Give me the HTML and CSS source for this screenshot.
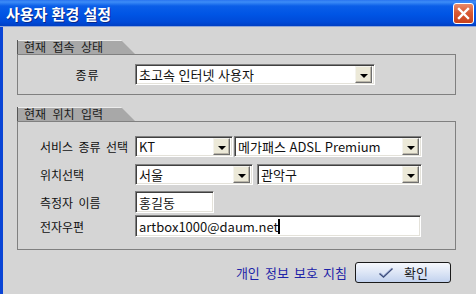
FILE: index.html
```html
<!DOCTYPE html>
<html lang="ko">
<head>
  <meta charset="UTF-8" />
  <title>사용자 환경 설정</title>
  <link rel="stylesheet" href="styles.css">
</head>
<body>
  <div class="titlebar">
    <span class="title">사용자 환경 설정</span>
    <span class="close">
      <svg width="13" height="13" viewBox="0 0 13 13"><path d="M2 2 L11 11 M11 2 L2 11" stroke="#fff" stroke-width="2.4" stroke-linecap="square"/></svg>
    </span>
  </div>

  <div class="client">
    <!-- 현재 접속 상태 -->
    <section class="group">
      <div class="tab">현재 접속 상태</div>
      <div class="box box-kind">
        <div class="row">
          <span class="label center">종류</span>
          <div class="combo w-kind"><span class="value">초고속 인터넷 사용자</span><span class="drop"></span></div>
        </div>
      </div>
    </section>

    <!-- 현재 위치 입력 -->
    <section class="group group-loc">
      <div class="tab">현재 위치 입력</div>
      <div class="box box-loc">
        <div class="row">
          <span class="label">서비스 종류 선택</span>
          <div class="combo w-isp"><span class="value">KT</span><span class="drop"></span></div>
          <div class="combo w-product"><span class="value">메가패스 ADSL Premium</span><span class="drop"></span></div>
        </div>
        <div class="row row-city">
          <span class="label">위치선택</span>
          <div class="combo w-city"><span class="value">서울</span><span class="drop"></span></div>
          <div class="combo w-gu"><span class="value">관악구</span><span class="drop"></span></div>
        </div>
        <div class="row row-name">
          <span class="label">측정자 이름</span>
          <div class="field w-name">홍길동</div>
        </div>
        <div class="row row-mail">
          <span class="label">전자우편</span>
          <div class="field w-mail">artbox1000@daum.net<span class="caret"></span></div>
        </div>
      </div>
    </section>

    <div class="footer">
      <a class="policy" href="#">개인 정보 보호 지침</a>
      <button class="ok">
        <svg width="16" height="12" viewBox="0 0 16 12"><path d="M1.5 6.5 L5.5 10 L14.5 1.5" fill="none" stroke="#3c4c7c" stroke-width="1.6"/><path d="M2.5 6 L5.5 8.6 L13.5 1.2" fill="none" stroke="#9fb0d8" stroke-width="0.8"/></svg>
        <span>확인</span>
      </button>
    </div>
  </div>
</body>
</html>
```

FILE: styles.css
```css
body {
  margin: 0;
  width: 476px;
  height: 294px;
  overflow: hidden;
  background: #d5d5d5;
  font-family: "Noto Sans CJK KR", "Noto Sans", sans-serif;
  color: #111;
}
.titlebar {
  height: 26px;
  display: flex;
  align-items: center;
  justify-content: space-between;
  padding: 0 2px 0 6px;
  background: linear-gradient(#2a74f0 0, #3d8cf7 2px, #0b5ee8 6px, #0055e5 14px, #004ad8 22px, #003fc4 26px);
  border-bottom: 1px solid #8fa6d8;
}
.title {
  color: #fff;
  font-size: 15px;
  font-weight: bold;
  text-shadow: 1px 1px 0 #0a2a8a;
}
.close {
  width: 19px;
  height: 19px;
  display: flex;
  align-items: center;
  justify-content: center;
  border: 1px solid #fff;
  border-radius: 3px;
  background: linear-gradient(#e88a6a, #d85a34 45%, #c8421c);
}
.client {
  height: 267px;
  box-sizing: border-box;
  border-left: 3px solid #0a45d6;
  padding: 13px 0 0 14px;
}
.tab {
  width: 118px;
  height: 14px;
  box-sizing: border-box;
  padding-left: 6px;
  font-size: 12px;
  line-height: 14px;
  word-spacing: 3px;
  color: #1a1a1a;
  background: linear-gradient(#ececec 0 1px, #a8a8a8 1px);
  border-left: 1px solid #555;
  clip-path: polygon(0 0, 104px 0, 100% 100%, 0 100%);
}
.box {
  width: 439px;
  box-sizing: border-box;
  border: 1px solid #808080;
}
.box-kind {
  padding: 9px 0 9px 22px;
}
.group-loc {
  margin-top: 12px;
}
.box-loc {
  padding: 14px 0 12px 22px;
}
.row {
  display: flex;
  align-items: center;
}
.row-city { margin-top: 7px; }
.row-name { margin-top: 6px; }
.row-mail { margin-top: 2px; }
.label {
  width: 95px;
  font-size: 12px;
  word-spacing: 2px;
}
.label.center {
  text-align: center;
  letter-spacing: 1px;
}
.combo, .field {
  display: flex;
  align-items: center;
  box-sizing: border-box;
  background: #fff;
  border: 1px solid;
  border-color: #808080 #fff #fff #808080;
  box-shadow: inset 1px 1px 0 #404040, inset -1px -1px 0 #e4e2da;
  font-size: 13px;
}
.combo {
  height: 21px;
  padding: 0 2px 0 3px;
}
.combo .value {
  flex: 1;
  white-space: nowrap;
  overflow: hidden;
}
.drop {
  width: 17px;
  height: 17px;
  box-sizing: border-box;
  display: flex;
  align-items: center;
  justify-content: center;
  background: #ece9d8;
  border: 1px solid;
  border-color: #f4f3ee #6f6f6f #6f6f6f #f4f3ee;
  box-shadow: inset -1px -1px 0 #b9b5a8;
}
.drop::after {
  content: "";
  margin-top: 2px;
  border-top: 4px solid #000;
  border-left: 4px solid transparent;
  border-right: 4px solid transparent;
}
.w-kind { width: 240px; }
.w-isp { width: 98px; }
.w-product { width: 188px; margin-left: 1px; }
.w-city { width: 118px; }
.w-gu { width: 165px; margin-left: 4px; }
.field {
  height: 22px;
  padding-left: 3px;
}
.w-name { width: 79px; }
.w-mail { width: 286px; }
.caret {
  width: 2px;
  height: 15px;
  background: #000;
}
.footer {
  margin-top: 12px;
  margin-right: 25px;
  display: flex;
  align-items: center;
  justify-content: flex-end;
  gap: 8px;
}
.policy {
  font-size: 13px;
  word-spacing: 1.5px;
  color: #1e24a8;
  text-decoration: none;
}
.ok {
  width: 96px;
  height: 21px;
  display: flex;
  align-items: center;
  justify-content: center;
  gap: 10px;
  padding: 0;
  border: 1px solid #1a1a1a;
  border-radius: 3px;
  background: linear-gradient(#f6f8fd, #dde6f6 50%, #c2d2ee);
  font-family: inherit;
  font-size: 13px;
  color: #1a1a1a;
}
```
